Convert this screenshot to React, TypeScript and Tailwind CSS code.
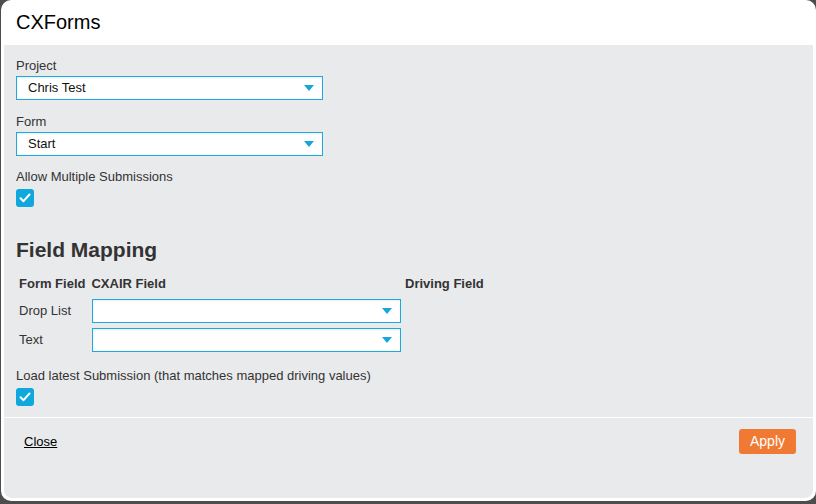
import React from 'react';

const Caret = () => (
  <svg width="10" height="6" viewBox="0 0 10 6" className="shrink-0">
    <path d="M0 0 H10 L5 6 Z" fill="#16a6df" />
  </svg>
);

const Select = ({ value, className }: { value?: string; className: string }) => (
  <div
    className={`flex items-center justify-between h-[24px] bg-white border border-[#1aa9e0] pl-[11px] pr-[8px] text-[13px] text-[#111] shadow-[inset_0_1px_2px_rgba(0,0,0,0.08)] ${className}`}
  >
    <span>{value}</span>
    <Caret />
  </div>
);

const Check = () => (
  <div className="w-[18px] h-[18px] rounded-[3px] bg-[#10a7df] flex items-center justify-center">
    <svg width="12" height="10" viewBox="0 0 12 10">
      <path d="M1.5 5.3 L4.5 8.2 L10.5 1.5" fill="none" stroke="white" strokeWidth="2" strokeLinecap="round" strokeLinejoin="round" />
    </svg>
  </div>
);

export default function App() {
  return (
    <div className="w-[816px] h-[504px] bg-[#4d4d4d] overflow-hidden" style={{ fontFamily: '"Liberation Sans", Arial, sans-serif' }}>
      <div className="ml-[1px] w-[815px] h-[501px] bg-white rounded-[10px] flex flex-col px-[3px] pb-[3px]">
        <div className="h-[45px] flex items-center pl-[12px] text-[20px] text-black shrink-0 pb-[2px]">CXForms</div>
        <div className="flex-1 bg-[#e9eaec] rounded-b-[8px] flex flex-col">
          <div className="flex flex-col pl-[12px] pt-[13px] text-[#333]">
            <div className="text-[13px] leading-[15px]">Project</div>
            <Select value="Chris Test" className="mt-[3px] w-[307px]" />
            <div className="text-[13px] leading-[15px] mt-[14px]">Form</div>
            <Select value="Start" className="mt-[3px] w-[307px]" />
            <div className="text-[13px] leading-[15px] mt-[13px]">Allow Multiple Submissions</div>
            <div className="mt-[5px]">
              <Check />
            </div>
            <div className="mt-[31px] text-[21px] leading-[24px] font-bold">Field Mapping</div>
            <div className="mt-[14px] ml-[3px] flex text-[13px] leading-[15px] font-bold whitespace-nowrap">
              <div className="w-[386px] flex gap-[6px]">
                <span>Form Field</span>
                <span>CXAIR Field</span>
              </div>
              <div>Driving Field</div>
            </div>
            <div className="mt-[8px] ml-[3px] flex flex-col gap-[5px]">
              {['Drop List', 'Text'].map((l) => (
                <div key={l} className="flex items-center text-[13px]">
                  <div className="w-[73px]">{l}</div>
                  <Select className="w-[309px]" />
                </div>
              ))}
            </div>
            <div className="text-[13px] leading-[15px] mt-[16px]">Load latest Submission (that matches mapped driving values)</div>
            <div className="mt-[5px]">
              <Check />
            </div>
          </div>
          <div className="mt-[11px] h-[1px] bg-white" />
          <div className="flex items-start justify-between pl-[20px] pr-[17px] pt-[11px]">
            <a className="text-[13px] text-black underline mt-[3px]">Close</a>
            <button className="w-[57px] h-[25px] rounded-[3px] bg-[#f07a33] text-white text-[14px]">Apply</button>
          </div>
        </div>
      </div>
    </div>
  );
}
